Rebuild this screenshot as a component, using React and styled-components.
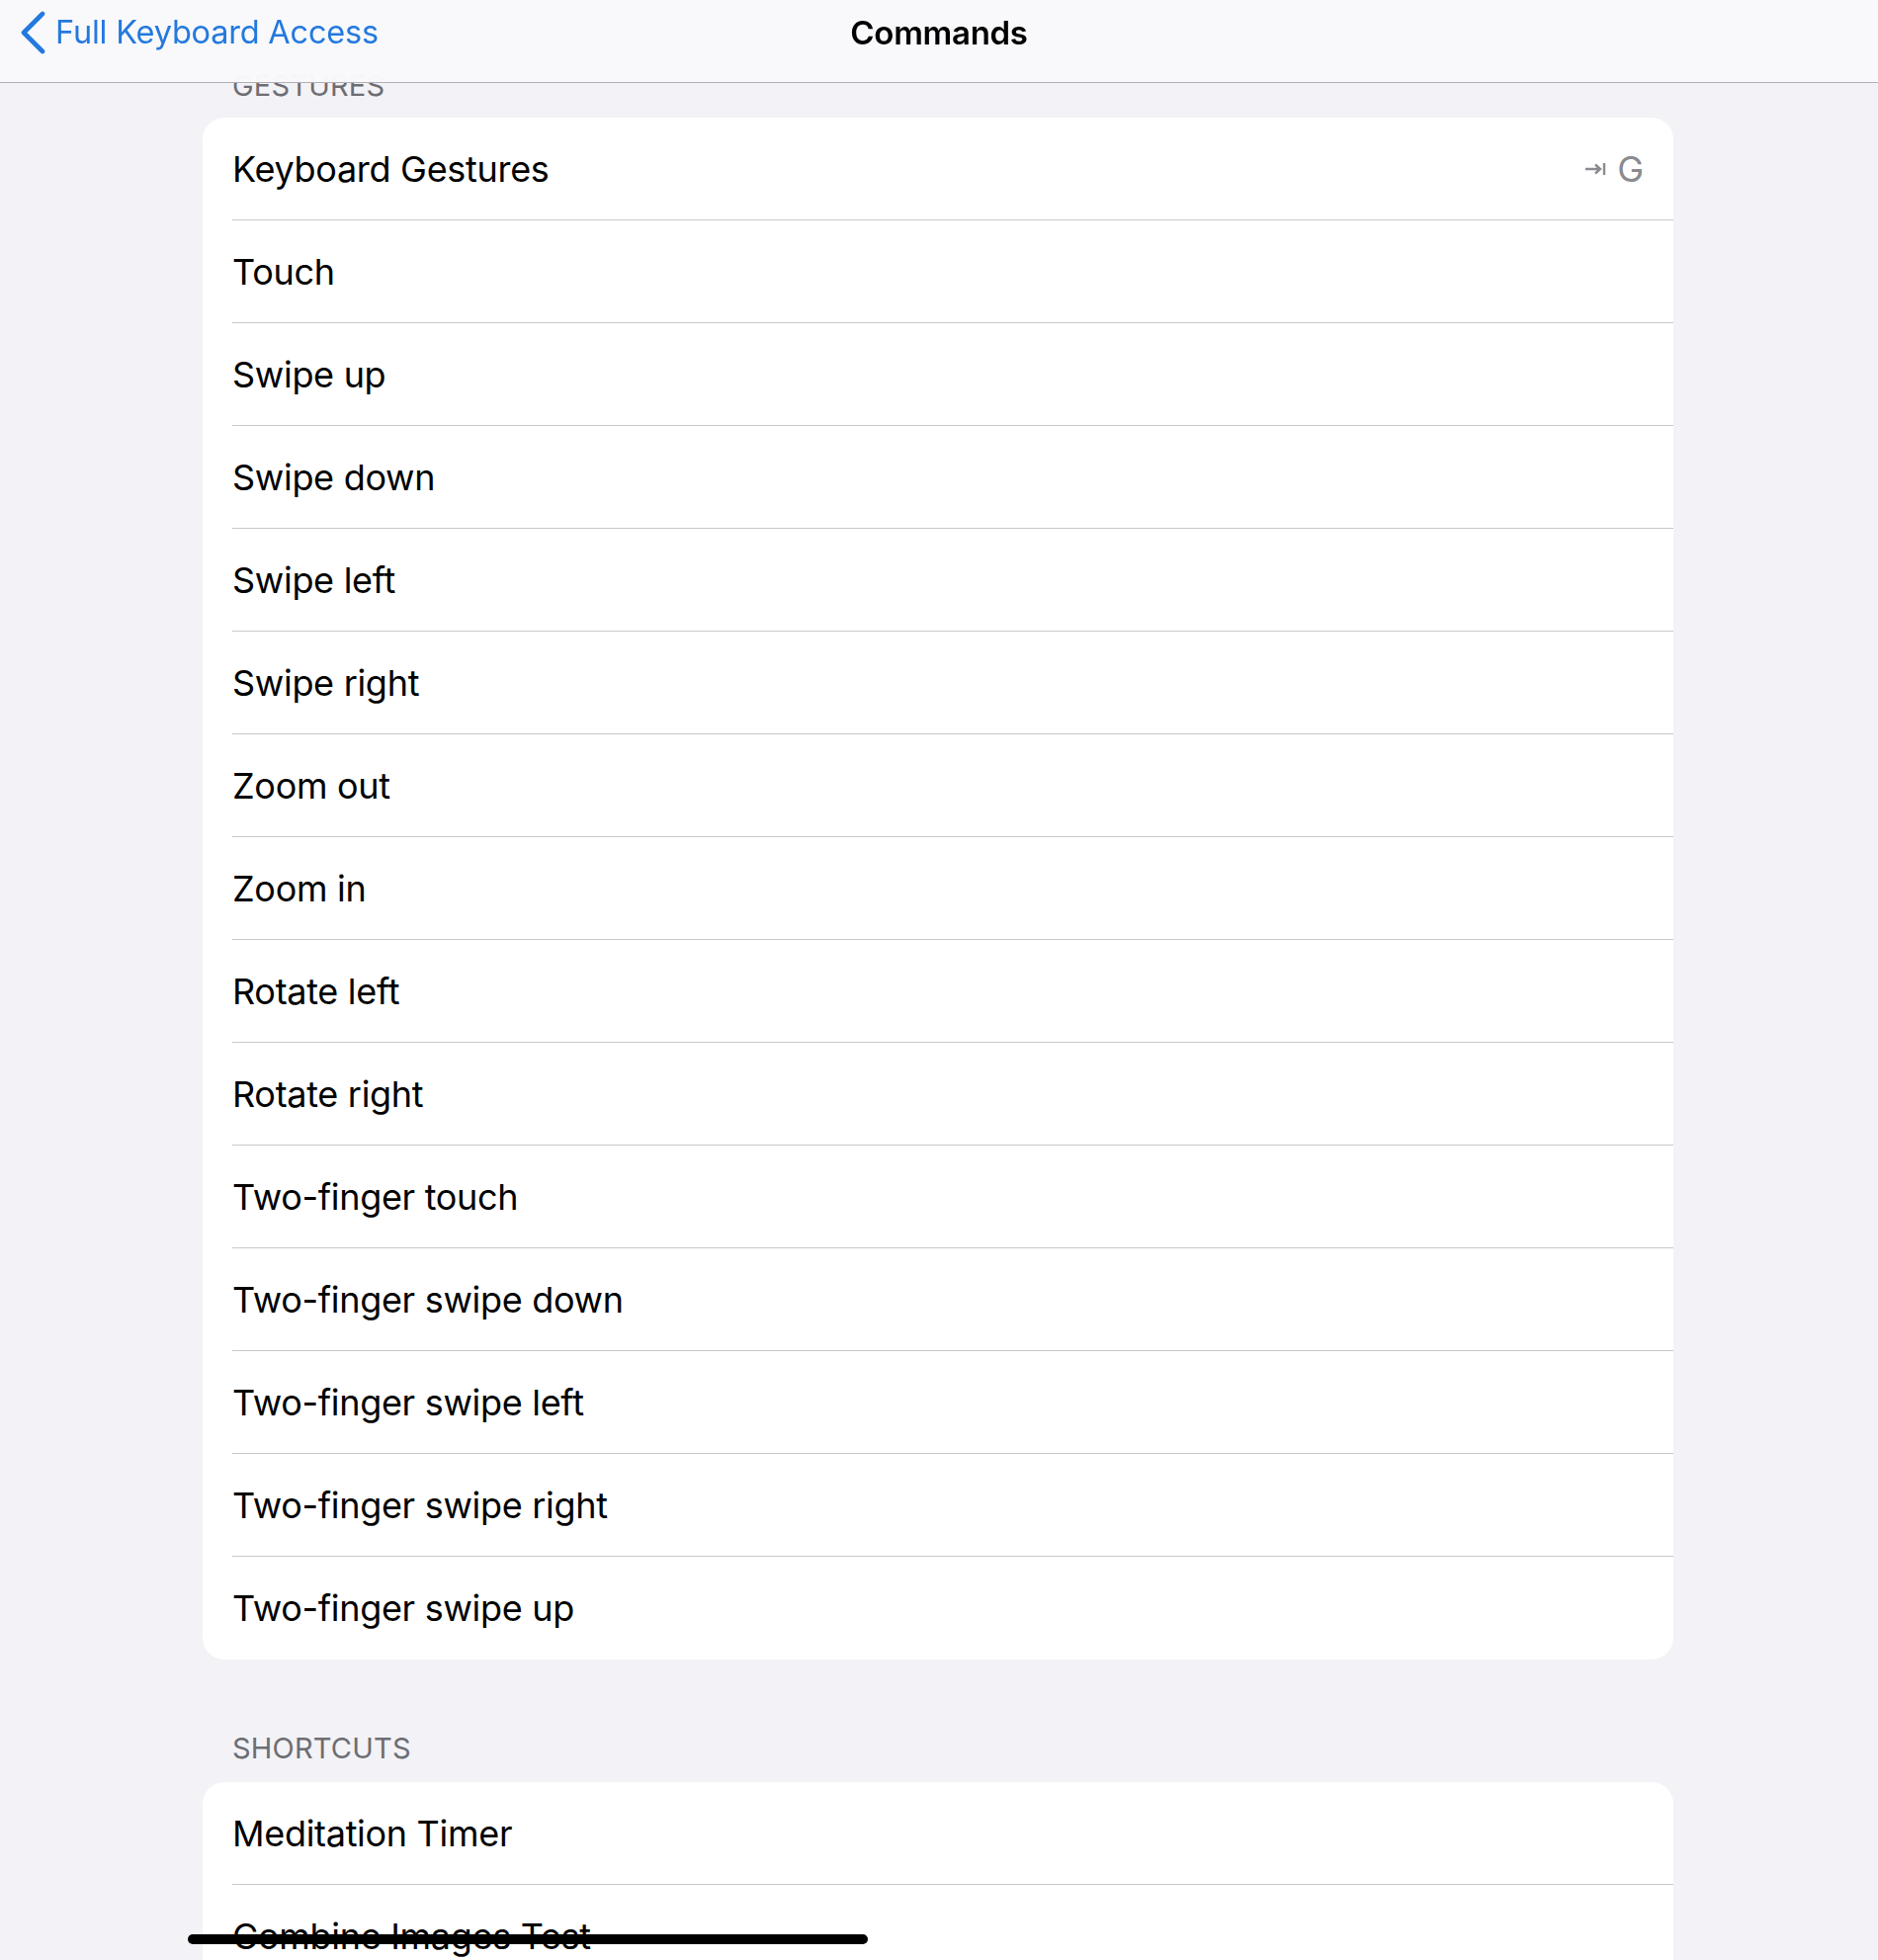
import styled, { createGlobalStyle } from "styled-components";

const gestures = [
  "Keyboard Gestures",
  "Touch",
  "Swipe up",
  "Swipe down",
  "Swipe left",
  "Swipe right",
  "Zoom out",
  "Zoom in",
  "Rotate left",
  "Rotate right",
  "Two-finger touch",
  "Two-finger swipe down",
  "Two-finger swipe left",
  "Two-finger swipe right",
  "Two-finger swipe up",
];

const shortcuts = ["Meditation Timer", "Combine Images Test"];

export default function App() {
  return (
    <>
      <GlobalStyle />
      <NavBar>
        <BackButton>
          <svg width="28" height="44" viewBox="0 0 28 44">
            <path
              d="M23 3 L4 22 L23 41"
              fill="none"
              stroke={blue}
              strokeWidth="4.6"
              strokeLinecap="round"
              strokeLinejoin="round"
            />
          </svg>
          <BackLabel>Full Keyboard Access</BackLabel>
        </BackButton>
        <NavTitle>Commands</NavTitle>
      </NavBar>

      <Content>
        <Section>
          <SectionHeader $gap={14}>Gestures</SectionHeader>
          <Card>
            {gestures.map((label, i) => (
              <Row key={label}>
                <RowInner>
                  <RowLabel>{label}</RowLabel>
                  {i === 0 && (
                    <Shortcut>
                      <svg width="22" height="14" viewBox="0 0 22 14">
                        <path
                          d="M1 7 H16 M11 2.5 L16 7 L11 11.5 M20 1 V13"
                          fill="none"
                          stroke={grey}
                          strokeWidth="2.4"
                          strokeLinecap="butt"
                        />
                      </svg>
                      <ShortcutKey>G</ShortcutKey>
                    </Shortcut>
                  )}
                </RowInner>
              </Row>
            ))}
          </Card>
        </Section>

        <Section $top={72}>
          <SectionHeader $gap={16}>Shortcuts</SectionHeader>
          <Card>
            {shortcuts.map((label) => (
              <Row key={label}>
                <RowInner>
                  <RowLabel>{label}</RowLabel>
                </RowInner>
              </Row>
            ))}
          </Card>
        </Section>
      </Content>

      <HomeIndicator />
    </>
  );
}

const blue = "#2479de";
const grey = "#8a8a8e";
const pageBg = "#f2f2f7";
const separator = "#c8c8cc";
const font = `Inter, "Noto Sans", "Liberation Sans", sans-serif`;

const GlobalStyle = createGlobalStyle`
  html, body {
    margin: 0;
    padding: 0;
    background: ${pageBg};
    font-family: ${font};
    -webkit-font-smoothing: antialiased;
  }
`;

const NavBar = styled.header`
  position: fixed;
  top: 0;
  left: 0;
  right: 0;
  height: 83px;
  background: rgba(249, 249, 251, 0.98);
  border-bottom: 1px solid #afafb4;
  display: flex;
  align-items: center;
  justify-content: center;
  z-index: 10;
`;

const BackButton = styled.div`
  position: absolute;
  left: 20px;
  top: 11px;
  display: flex;
  align-items: center;
  gap: 8px;
`;

const BackLabel = styled.span`
  color: ${blue};
  font-size: 32.5px;
  letter-spacing: -0.2px;
  line-height: 44px;
`;

const NavTitle = styled.h1`
  margin: 0 0 18px 0;
  font-size: 33px;
  font-weight: 600;
  color: #000;
  letter-spacing: -0.3px;
`;

const Content = styled.main`
  padding: 69px 207px 0 205px;
`;

const Section = styled.section`
  margin-top: ${({ $top }) => $top || 0}px;
`;

const SectionHeader = styled.h2`
  margin: 0;
  padding: 0 0 ${({ $gap }) => $gap}px 30px;
  font-size: 29px;
  line-height: 36px;
  font-weight: 400;
  text-transform: uppercase;
  color: #6d6d72;
  letter-spacing: 0.2px;
`;

const Card = styled.div`
  background: #fff;
  border-radius: 22px;
  overflow: hidden;
`;

const Row = styled.div`
  padding-left: 30px;

  &:last-child > div {
    border-bottom: none;
    height: 104px;
  }
`;

const RowInner = styled.div`
  height: 103px;
  border-bottom: 1px solid ${separator};
  display: flex;
  align-items: center;
  justify-content: space-between;
  padding-right: 30px;
`;

const RowLabel = styled.span`
  font-size: 36px;
  line-height: 44px;
  color: #000;
  letter-spacing: -0.3px;
`;

const Shortcut = styled.span`
  display: flex;
  align-items: center;
  gap: 11px;
`;

const ShortcutKey = styled.span`
  font-size: 36px;
  line-height: 44px;
  color: ${grey};
`;

const HomeIndicator = styled.div`
  position: fixed;
  left: 190px;
  top: 1957px;
  width: 688px;
  height: 10px;
  border-radius: 5px;
  background: #000;
  z-index: 20;
`;
